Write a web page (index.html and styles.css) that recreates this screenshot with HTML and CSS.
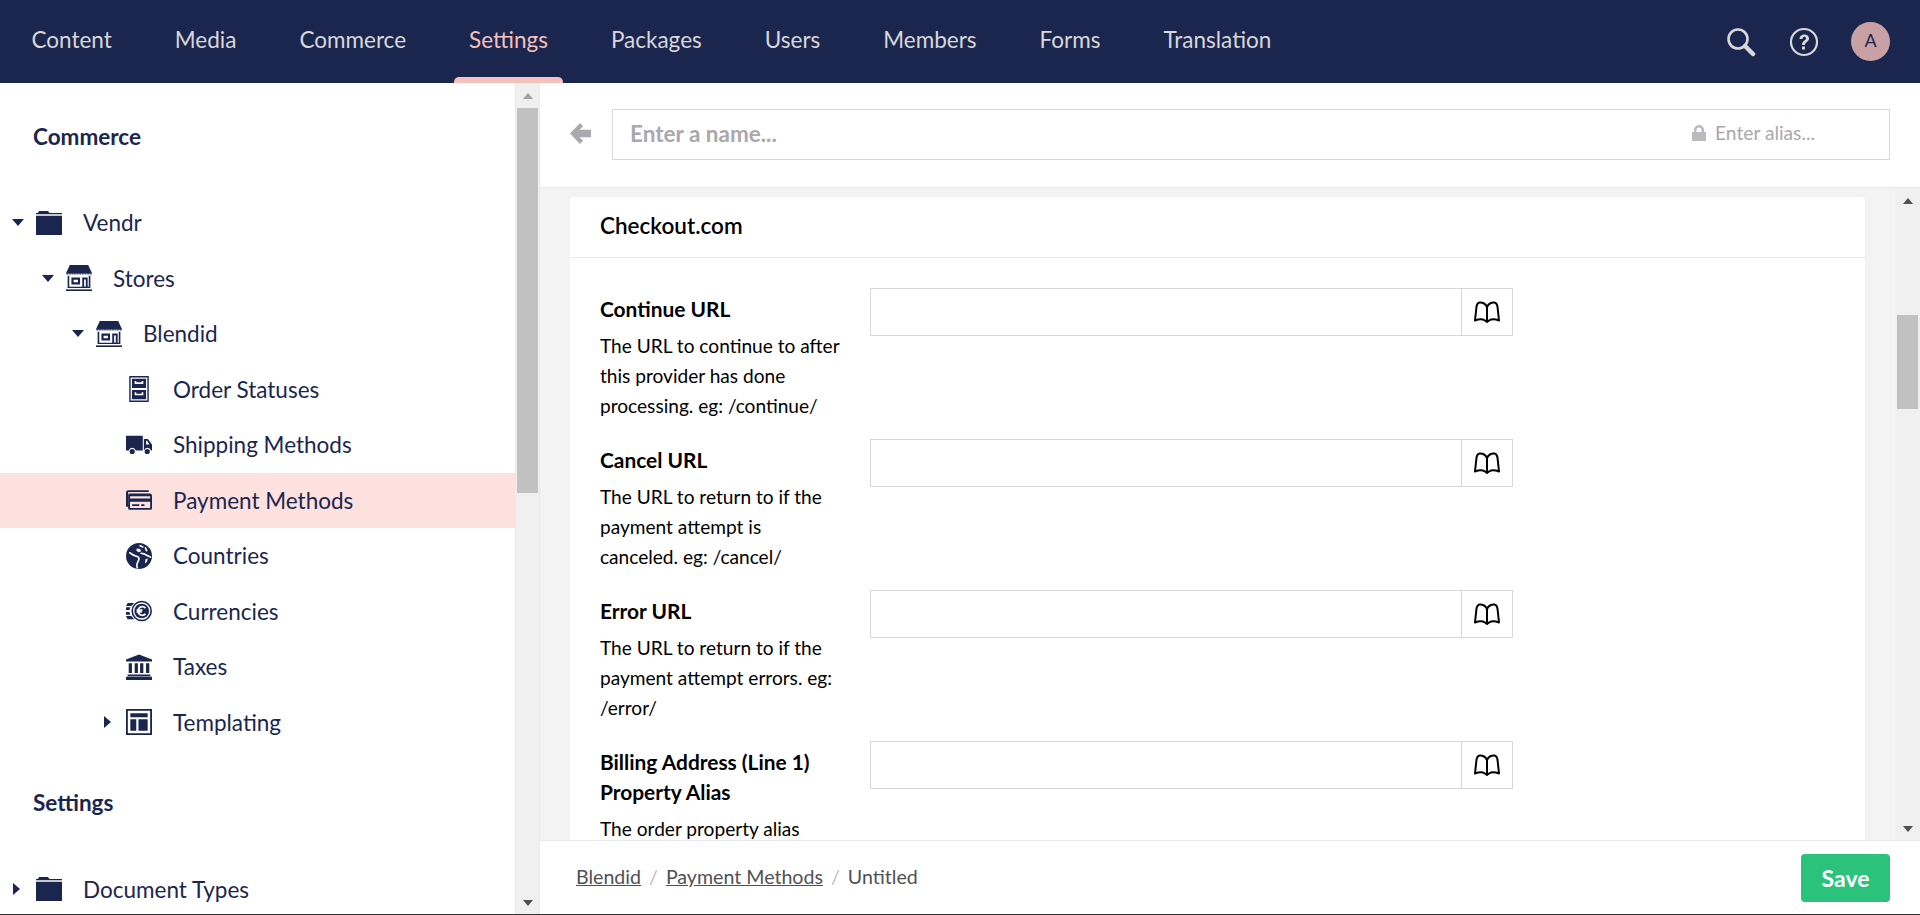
FILE: index.html
```html
<!DOCTYPE html>
<html lang="en">

<head>
    <meta charset="UTF-8">
    <meta name="viewport" content="width=device-width, initial-scale=1.0">
    <title>Checkout.com - Payment Methods</title>
    <link rel="stylesheet" href="styles.css">
</head>

<body>
    <svg class="sprites" width="0" height="0" aria-hidden="true">
        <symbol id="i-folder" viewBox="0 0 24 24">
            <path d="M3 1h8l1.500 1.800H24V4H0V2.800h1.500zM0 5.200h24V23H0z" />
        </symbol>
        <symbol id="i-store" viewBox="0 0 24 24">
            <path d="M3.500 0h17L24 7.500H0z" />
            <path d="M0 7.500h2.400a1.200 1.200 0 0 1-2.400 0zM2.400 7.500h2.400a1.200 1.200 0 0 1-2.400 0zM4.800 7.500h2.400a1.200 1.200 0 0 1-2.400 0zM7.200 7.500h2.400a1.200 1.200 0 0 1-2.400 0zM9.600 7.500H12a1.200 1.200 0 0 1-2.400 0zM12 7.500h2.400a1.200 1.200 0 0 1-2.400 0zM14.400 7.500h2.400a1.200 1.200 0 0 1-2.400 0zM16.800 7.500h2.400a1.200 1.200 0 0 1-2.400 0zM19.200 7.500h2.400a1.200 1.200 0 0 1-2.400 0zM21.600 7.500H24a1.200 1.200 0 0 1-2.400 0z" />
            <path d="M1.500 10H3v11h-1.500zM21 10h1.500v11H21zM1.500 20h21v1.200h-21z" />
            <path fill-rule="evenodd" d="M5 11.500h8V18H5zm2 2v2.500h4v-2.500zM15 11.500h5V21h-5zm1.700 1.800V20h1.600v-6.700z" />
            <path d="M0 22.500h24V24H0z" />
        </symbol>
        <symbol id="i-cabinet" viewBox="0 0 24 24">
            <path fill-rule="evenodd" d="M3 0h18v24H3zm1.300 1.300v21.400h15.400V1.300z" />
            <path fill-rule="evenodd" d="M5.500 2.500h13v8.500h-13zM8 4.500v2.800h8V4.500h-1.500v1.300h-5V4.500zM5.500 13h13v8.500h-13zM8 15v2.800h8V15h-1.500v1.300h-5V15z" />
        </symbol>
        <symbol id="i-truck" viewBox="0 0 24 24">
            <path fill-rule="evenodd" d="M0 3.500h15.500V17H9a3.400 3.400 0 0 0-6.500 0H0zM16.500 6.500h3.700l3.800 5V17h-.9a3.400 3.400 0 0 0-6.500 0h-.1zm2 1.500v3.500h3.200L19.400 8z" />
            <circle cx="5.700" cy="18" r="2.400" />
            <circle cx="19.600" cy="18" r="2.400" />
        </symbol>
        <symbol id="i-card" viewBox="0 0 24 24">
            <path d="M2 3h19v1.600H2v12h1.500v1.600H0V5a2 2 0 0 1 2-2z" />
            <path fill-rule="evenodd" d="M3.500 6H22a2 2 0 0 1 2 2v11.500a1.500 1.500 0 0 1-1.500 1.500h-19A1.500 1.500 0 0 1 2 19.500v-12A1.500 1.500 0 0 1 3.500 6zm.2 2.500v2h18.600v-2zm0 5v5.800h18.600v-5.800zm2 2.500h6.500v1.500H5.700zm8.300 0h3v1.500h-3z" />
        </symbol>
        <symbol id="i-globe" viewBox="0 0 24 24">
            <circle cx="12" cy="12" r="12" />
            <path fill="none" stroke="#fff" stroke-width="1.500" stroke-linecap="round" d="M13 2.500l2.500 1.200M18 4.500l1 2.500M3.500 9c2 1.500 3.500 2.500 5.500 3 2 .5 3 1 3 2.500s-1.500 3-2 5.500c0 1 0 2 .5 3M14 9.500l2.500.5 3 1.500 3 1.500" />
            <path fill="#fff" d="M10 5l3 .5 1 2-2.500 1-2-1.500zM18 15l2-1-.5 3-2 2z" />
        </symbol>
        <symbol id="i-coin" viewBox="0 0 24 24">
            <path fill-rule="evenodd" d="M14.500 2.500a9.500 9.500 0 1 1 0 19 9.500 9.500 0 0 1 0-19zm0 1.500a8 8 0 1 0 0 16 8 8 0 0 0 0-16z" />
            <circle cx="14.500" cy="12" r="6.800" />
            <path fill="none" stroke="#fff" stroke-width="1.600" d="M18 9.300a4 4 0 1 0 0 5.400M9.800 11.100h5.400M9.800 12.900h4.800" />
            <path d="M1.500 4.500h6L5 7.300H0zM0 8.500h4L3.200 11H0zM0 13h3.200l.8 2.500H0zM0 16.700h5l2.500 2.800h-6z" />
        </symbol>
        <symbol id="i-bank" viewBox="0 0 24 24">
            <path d="M12 .5l12 4.500v2H0V5zM2.500 8.500h3v9h-3zM8 8.500h3v9H8zM13 8.500h3v9h-3zM18.500 8.500h3v9h-3zM1.500 19h21v1.500h-21zM0 21h24v3H0z" />
        </symbol>
        <symbol id="i-layout" viewBox="0 0 24 24">
            <path fill-rule="evenodd" d="M0 0h24v24H0zm1.700 1.700v20.600h20.600V1.700zM4 4h16v3.500H4zM4 9.500h5.500V20H4zM11.500 9.500H20V20h-8.500z" />
        </symbol>
        <symbol id="i-book" viewBox="0 0 26 22">
            <path fill="none" stroke="currentColor" stroke-width="2" stroke-linejoin="round" d="M13 6C11.500 2.500 8 1 5.500 1.500 3 2 2.500 4.500 2.300 7.500L1 19.500c4-1.500 8-1.300 10 0l2 1.500 2-1.500c2-1.300 6-1.500 10 0L23.700 7.500C23.500 4.500 23 2 20.500 1.500 18 1 14.500 2.500 13 6zm0 0v14" />
        </symbol>
    </svg>

    <header class="topbar">
        <nav class="sections">
            <a class="section">Content</a>
            <a class="section">Media</a>
            <a class="section">Commerce</a>
            <a class="section active">Settings</a>
            <a class="section">Packages</a>
            <a class="section">Users</a>
            <a class="section">Members</a>
            <a class="section">Forms</a>
            <a class="section">Translation</a>
        </nav>
        <div class="tools">
            <svg class="tool-icon" viewBox="0 0 30 30">
                <circle cx="12" cy="12" r="9.500" fill="none" stroke="currentColor" stroke-width="2.600" />
                <path d="M19 19l8 8" stroke="currentColor" stroke-width="4.500" stroke-linecap="round" />
            </svg>
            <svg class="tool-icon help" viewBox="0 0 30 30">
                <circle cx="15" cy="15" r="13" fill="none" stroke="currentColor" stroke-width="2.200" />
                <path d="M10.500 12c0-6 9.500-6 9.500-.5 0 3.500-4 3.500-4 6.500h-3c0-4.500 4-4.500 4-6.500 0-2.500-3.500-2.500-3.500.5z" fill="currentColor" />
                <rect x="13" y="19.500" width="3" height="3" fill="currentColor" />
            </svg>
            <div class="avatar">A</div>
        </div>
    </header>

    <div class="app">
        <aside class="sidebar">
            <div class="tree">
                <h3 class="tree-title">Commerce</h3>
                <ul class="tree-list">
                    <li class="node lvl-0"><span class="caret down"></span><svg class="node-icon"><use href="#i-folder" /></svg><span class="node-name">Vendr</span></li>
                    <li class="node lvl-1"><span class="caret down"></span><svg class="node-icon"><use href="#i-store" /></svg><span class="node-name">Stores</span></li>
                    <li class="node lvl-2"><span class="caret down"></span><svg class="node-icon"><use href="#i-store" /></svg><span class="node-name">Blendid</span></li>
                    <li class="node lvl-3"><span class="caret"></span><svg class="node-icon"><use href="#i-cabinet" /></svg><span class="node-name">Order Statuses</span></li>
                    <li class="node lvl-3"><span class="caret"></span><svg class="node-icon"><use href="#i-truck" /></svg><span class="node-name">Shipping Methods</span></li>
                    <li class="node lvl-3 selected"><span class="caret"></span><svg class="node-icon"><use href="#i-card" /></svg><span class="node-name">Payment Methods</span></li>
                    <li class="node lvl-3"><span class="caret"></span><svg class="node-icon"><use href="#i-globe" /></svg><span class="node-name">Countries</span></li>
                    <li class="node lvl-3"><span class="caret"></span><svg class="node-icon"><use href="#i-coin" /></svg><span class="node-name">Currencies</span></li>
                    <li class="node lvl-3"><span class="caret"></span><svg class="node-icon"><use href="#i-bank" /></svg><span class="node-name">Taxes</span></li>
                    <li class="node lvl-3"><span class="caret right"></span><svg class="node-icon"><use href="#i-layout" /></svg><span class="node-name">Templating</span></li>
                </ul>
                <h3 class="tree-title second">Settings</h3>
                <ul class="tree-list">
                    <li class="node lvl-0"><span class="caret right"></span><svg class="node-icon"><use href="#i-folder" /></svg><span class="node-name">Document Types</span></li>
                </ul>
            </div>
            <div class="scrollbar tree-scroll">
                <span class="arrow up"></span>
                <div class="thumb"></div>
                <span class="arrow dn"></span>
            </div>
        </aside>

        <main class="editor">
            <div class="editor-head">
                <svg class="back" viewBox="0 0 20 20">
                    <path d="M9.500 0L0 10l9.500 10 3-3-3.500-3.500H20v-7H9L12.500 3z" />
                </svg>
                <div class="name-box">
                    <span class="name-hint">Enter a name...</span>
                    <span class="alias">
                        <svg class="lock" viewBox="0 0 14 16">
                            <path fill-rule="evenodd" d="M2 7V5a5 5 0 0 1 10 0v2h2v9H0V7zm2.500 0h5V5a2.500 2.500 0 0 0-5 0z" />
                        </svg>
                        Enter alias...
                    </span>
                </div>
            </div>

            <div class="editor-body">
                <div class="body-scroll">
                    <section class="card">
                        <h2 class="card-title">Checkout.com</h2>
                        <div class="card-body">
                            <div class="prop">
                                <div class="prop-label">
                                    <label>Continue URL</label>
                                    <p>The URL to continue to after this provider has done processing. eg: /continue/</p>
                                </div>
                                <div class="picker">
                                    <div class="picker-input"></div>
                                    <div class="picker-btn"><svg class="book"><use href="#i-book" /></svg></div>
                                </div>
                            </div>
                            <div class="prop">
                                <div class="prop-label">
                                    <label>Cancel URL</label>
                                    <p>The URL to return to if the payment attempt is canceled. eg: /cancel/</p>
                                </div>
                                <div class="picker">
                                    <div class="picker-input"></div>
                                    <div class="picker-btn"><svg class="book"><use href="#i-book" /></svg></div>
                                </div>
                            </div>
                            <div class="prop">
                                <div class="prop-label">
                                    <label>Error URL</label>
                                    <p>The URL to return to if the payment attempt errors. eg: /error/</p>
                                </div>
                                <div class="picker">
                                    <div class="picker-input"></div>
                                    <div class="picker-btn"><svg class="book"><use href="#i-book" /></svg></div>
                                </div>
                            </div>
                            <div class="prop">
                                <div class="prop-label">
                                    <label>Billing Address (Line 1) Property Alias</label>
                                    <p>The order property alias</p>
                                </div>
                                <div class="picker">
                                    <div class="picker-input"></div>
                                    <div class="picker-btn"><svg class="book"><use href="#i-book" /></svg></div>
                                </div>
                            </div>
                        </div>
                    </section>
                </div>
                <div class="scrollbar body-bar">
                    <span class="arrow up dark"></span>
                    <div class="thumb"></div>
                    <span class="arrow dn"></span>
                </div>
            </div>

            <footer class="editor-foot">
                <div class="crumbs">
                    <a>Blendid</a><span class="sep">/</span><a>Payment Methods</a><span class="sep">/</span><span>Untitled</span>
                </div>
                <button class="save">Save</button>
            </footer>
        </main>
    </div>
</body>

</html>
```

FILE: styles.css
```css
* {
    box-sizing: border-box;
}

html,
body {
    height: 915px;
    margin: 0;
    overflow: hidden;
}

body {
    font-family: Lato, "Open Sans", sans-serif;
    font-variant-ligatures: common-ligatures;
    text-rendering: optimizeLegibility;
    background-color: #fff;
    color: #1b264f;
    border-bottom: 1px solid #333;
    display: flex;
    flex-direction: column;
}

.sprites {
    position: absolute;
}

/* top bar */
.topbar {
    height: 83px;
    flex-shrink: 0;
    background-color: #1b264f;
    display: flex;
    justify-content: space-between;
    align-items: center;
    color: #d8d7d9;
}

.sections {
    display: flex;
    height: 100%;
}

.section {
    position: relative;
    display: flex;
    align-items: center;
    padding: 0 31.500px 5px;
    font-size: 22.500px;
    height: 100%;
}

.section.active {
    color: #f5c1bc;
}

.section.active::after {
    content: "";
    position: absolute;
    left: 16px;
    right: 16px;
    bottom: 0;
    height: 6px;
    background-color: #f5c1bc;
    border-radius: 5px 5px 0 0;
}

.tools {
    display: flex;
    align-items: center;
    padding-right: 30px;
}

.tool-icon {
    width: 30px;
    height: 30px;
    margin-right: 33px;
}

.tool-icon.help {
    margin-right: 32px;
}

.avatar {
    width: 39px;
    height: 39px;
    border-radius: 50%;
    background-color: #c9a0a4;
    color: #1b264f;
    font-size: 18px;
    display: flex;
    align-items: center;
    justify-content: center;
    padding-bottom: 3px;
}

.app {
    flex: 1;
    display: flex;
    min-height: 0;
}

/* tree */
.sidebar {
    width: 540px;
    flex-shrink: 0;
    display: flex;
}

.tree {
    flex: 1;
    overflow: hidden;
    padding-top: 41px;
}

.tree-title {
    margin: 0;
    padding-left: 33px;
    font-size: 22.500px;
    font-weight: 700;
    line-height: 26px;
    height: 71px;
}

.tree-title.second {
    margin-top: 39.500px;
    height: 72px;
}

.tree-list {
    list-style: none;
    margin: 0;
    padding: 0;
}

.node {
    height: 55.500px;
    display: flex;
    align-items: center;
    font-size: 22.500px;
}

.lvl-0 {
    padding-left: 12px;
}

.lvl-1 {
    padding-left: 42px;
}

.lvl-2 {
    padding-left: 72px;
}

.lvl-3 {
    padding-left: 103px;
}

.lvl-3 .caret {
    width: 23px;
}

.selected {
    background-color: #fde1de;
}

.caret {
    width: 24px;
    flex-shrink: 0;
}

.caret.down::before {
    content: "";
    display: block;
    width: 0;
    border-left: 6px solid transparent;
    border-right: 6px solid transparent;
    border-top: 7px solid #1b264f;
}

.caret.right::before {
    content: "";
    display: block;
    width: 0;
    margin-left: 1px;
    border-top: 6px solid transparent;
    border-bottom: 6px solid transparent;
    border-left: 7px solid #1b264f;
}

.node-icon {
    width: 26px;
    height: 26px;
    flex-shrink: 0;
    fill: #1b264f;
}

.node-name {
    margin-left: 21px;
}

/* scrollbars */
.scrollbar {
    width: 25px;
    flex-shrink: 0;
    background-color: #f0f0f0;
    display: flex;
    flex-direction: column;
    align-items: center;
    padding: 0 2px;
}

.tree-scroll {
    padding: 0 1px;
    border-left: 1px solid #e9e9eb;
    border-right: 1px solid #e9e9eb;
}

.thumb {
    width: 100%;
    background-color: #c1c1c1;
}

.tree-scroll .thumb {
    height: 385px;
    margin-top: 9px;
}

.body-bar .thumb {
    height: 94px;
    margin-top: 111px;
}

.arrow {
    width: 0;
    border-left: 5.500px solid transparent;
    border-right: 5.500px solid transparent;
    flex-shrink: 0;
}

.arrow.up {
    margin-top: 10px;
    border-bottom: 6px solid #a3a3a3;
}

.arrow.dn {
    margin-top: auto;
    margin-bottom: 8px;
    border-top: 6px solid #505050;
}

.arrow.up.dark {
    border-bottom-color: #505050;
}

/* editor */
.editor {
    flex: 1;
    min-width: 0;
    display: flex;
    flex-direction: column;
}

.editor-head {
    height: 105px;
    flex-shrink: 0;
    padding: 26px 30px 0;
    display: flex;
    align-items: flex-start;
    border-bottom: 1px solid #e9e9eb;
}

.back {
    width: 21px;
    height: 21px;
    margin: 14px 21px 0 0;
    fill: #a9a9ae;
}

.name-box {
    flex: 1;
    height: 51px;
    border: 1px solid #d8d7d9;
    display: flex;
    justify-content: space-between;
    align-items: center;
    padding: 0 74px 3px 17px;
}

.name-hint {
    font-size: 22.500px;
    font-weight: 700;
    color: #a8a8ad;
}

.alias {
    font-size: 19.200px;
    color: #a8a8ad;
    display: flex;
    align-items: center;
    padding-bottom: 1px;
}

.lock {
    width: 14px;
    height: 16px;
    margin-right: 9px;
    fill: #bbbabf;
}

.editor-body {
    flex: 1;
    min-height: 0;
    display: flex;
    background-color: #f4f3f4;
    border-bottom: 1px solid #e9e9eb;
}

.body-scroll {
    flex: 1;
    min-width: 0;
    overflow: hidden;
    padding: 9px 30px 0;
}

.card {
    background-color: #fff;
    border-radius: 4px 4px 0 0;
}

.card-title {
    margin: 0;
    height: 61px;
    padding: 0 30px;
    font-size: 22.500px;
    font-weight: 600;
    line-height: 57px;
    color: #000;
    border-bottom: 1px solid #e9e9eb;
}

.card-body {
    padding: 30px 30px 0;
}

.prop {
    display: flex;
    height: 151px;
    color: #000;
}

.prop-label {
    width: 270px;
    flex-shrink: 0;
    padding-right: 28px;
}

.prop-label label {
    display: block;
    font-size: 20.900px;
    font-weight: 700;
    line-height: 30px;
    margin: 6px 0 7px;
}

.prop-label p {
    margin: 0;
    font-size: 19.100px;
    line-height: 30px;
}

.picker {
    width: 643px;
    height: 48px;
    display: flex;
    border: 1px solid #d8d7d9;
}

.picker-input {
    flex: 1;
}

.picker-btn {
    width: 51px;
    border-left: 1px solid #d8d7d9;
    display: flex;
    align-items: center;
    justify-content: center;
    color: #000;
}

.book {
    width: 28px;
    height: 22px;
}

.editor-foot {
    height: 73px;
    flex-shrink: 0;
    display: flex;
    justify-content: space-between;
    align-items: center;
    padding: 0 30px 0 36px;
}

.crumbs {
    font-size: 19.600px;
    color: #515054;
    padding-bottom: 2px;
}

.crumbs a {
    text-decoration: underline;
}

.sep {
    color: #bbbabf;
    margin: 0 8px;
}

.save {
    width: 89px;
    height: 48px;
    border: none;
    border-radius: 4px;
    background-color: #2bc37c;
    color: #fff;
    font-family: inherit;
    font-size: 23px;
    font-weight: 700;
}
```
